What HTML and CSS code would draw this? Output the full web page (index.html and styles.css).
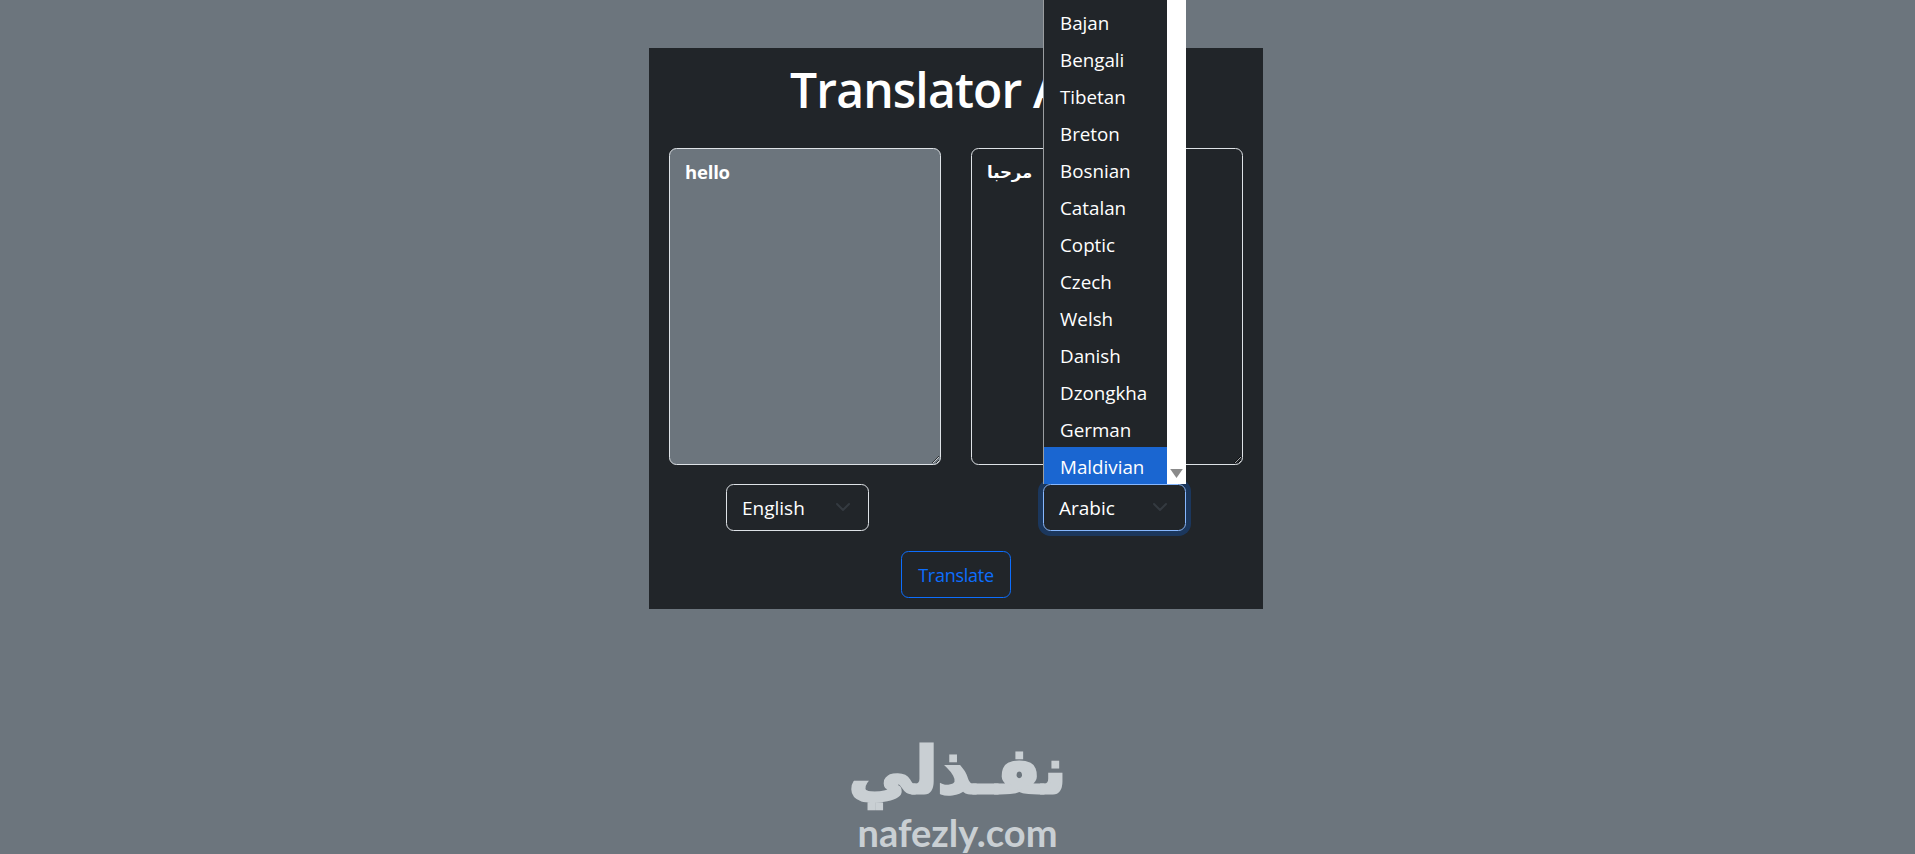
FILE: index.html
```html
<!DOCTYPE html>
<html lang="en">
<head>
<meta charset="utf-8">
<title>Translator App</title>
<link rel="stylesheet" href="styles.css">
</head>
<body>
<main class="card">
  <h1 class="title">Translator App</h1>
  <div class="panes">
    <textarea class="pane pane-source" readonly>hello</textarea>
    <textarea class="pane pane-target" readonly>مرحبا</textarea>
  </div>
  <div class="selects">
    <div class="select">
      <span>English</span>
      <svg class="chevron" viewBox="0 0 16 16" aria-hidden="true"><path d="M2 5l6 6 6-6"/></svg>
    </div>
    <div class="select select-open">
      <span>Arabic</span>
      <svg class="chevron" viewBox="0 0 16 16" aria-hidden="true"><path d="M2 5l6 6 6-6"/></svg>
      <div class="listbox">
        <ul class="options">
          <li>Bajan</li>
          <li>Bengali</li>
          <li>Tibetan</li>
          <li>Breton</li>
          <li>Bosnian</li>
          <li>Catalan</li>
          <li>Coptic</li>
          <li>Czech</li>
          <li>Welsh</li>
          <li>Danish</li>
          <li>Dzongkha</li>
          <li>German</li>
          <li class="active">Maldivian</li>
        </ul>
        <div class="scrollbar"><svg class="scroll-arrow" viewBox="0 0 14 10" aria-hidden="true"><path d="M0 0h14L7 10z"/></svg></div>
      </div>
    </div>
  </div>
  <div class="actions"><button class="translate" type="button">Translate</button></div>
</main>
<footer class="logo">
  <div class="logo-ar" lang="ar" dir="rtl">نفـذلي</div>
  <div class="logo-en">nafezly.com</div>
</footer>
</body>
</html>
```
FILE: styles.css
```css
html, body { margin: 0; height: 100%; }
body {
  background: #6c757d;
  font-family: "Open Sans", "Noto Sans", sans-serif;
  color: #fff;
  overflow: hidden;
}
.card {
  box-sizing: border-box;
  width: 614px;
  height: 561px;
  margin: 48px 0 0 649px;
  background: #212529;
  padding: 0 20px;
}
.title {
  margin: 0;
  height: 100px;
  font-size: 48px;
  line-height: 84px;
  font-weight: 600;
  text-align: center;
  letter-spacing: -.85px;
}
.panes { display: flex; justify-content: space-between; }
.pane {
  box-sizing: border-box;
  width: 272px;
  height: 317px;
  margin: 0;
  padding: 10px 15px;
  border: 1px solid #dee2e6;
  border-radius: 7.5px;
  color: #fff;
  font-family: "Open Sans", "DejaVu Sans", sans-serif;
  font-weight: 700;
  font-size: 18.5px;
  letter-spacing: -.2px;
  line-height: 25px;
  outline: none;
  display: block;
  resize: both;
}
.pane-source { background: #6c757d; }
.pane-target { background: #212529; font-size: 16.5px; }
.selects {
  display: flex;
  justify-content: space-between;
  padding: 19px 57px 0;
}
.select {
  box-sizing: border-box;
  position: relative;
  width: 143px;
  height: 47px;
  padding: 0 15px;
  display: flex;
  align-items: center;
  justify-content: space-between;
  border: 1px solid #dee2e6;
  border-radius: 7.5px;
  font-size: 19px;
}
.select-open {
  border-color: #86b7fe;
  box-shadow: 0 0 0 5px rgba(13, 110, 253, .25);
}
.chevron {
  width: 16px;
  height: 16px;
  margin: 0 2px 2px 0;
  fill: none;
  stroke: #343a40;
  stroke-width: 2;
  stroke-linecap: round;
  stroke-linejoin: round;
}
.listbox {
  position: absolute;
  left: -1px;
  right: -1px;
  bottom: 46px;
  height: 485px;
  overflow: hidden;
  display: flex;
  align-items: flex-end;
  background: #212529;
  border-left: 1px solid #9a9da0;
  box-sizing: border-box;
}
.options {
  flex: 1;
  list-style: none;
  margin: 0;
  padding: 0;
  font-size: 18.8px;
}
.options li {
  box-sizing: border-box;
  height: 37px;
  line-height: 37px;
  padding: 2px 0 0 16px;
}
.options .active { background: #1a66d1; }
.scrollbar {
  position: relative;
  align-self: stretch;
  flex: 0 0 19px;
  background: #fff;
}
.scroll-arrow {
  position: absolute;
  left: 3px;
  bottom: 6px;
  width: 13px;
  height: 9px;
  fill: #8a8a8a;
}
.actions { display: flex; justify-content: center; padding-top: 20px; }
.translate {
  box-sizing: border-box;
  width: 110px;
  height: 47px;
  background: transparent;
  border: 1px solid #0d6efd;
  border-radius: 7.5px;
  color: #0d6efd;
  font-family: inherit;
  font-size: 18px;
  letter-spacing: -.25px;
  padding: 0;
}
.logo {
  margin-top: 124px;
  text-align: center;
  color: #c9cfd3;
}
.logo-ar {
  font-family: "DejaVu Sans", sans-serif;
  font-weight: 700;
  font-size: 64px;
  line-height: 76px;
  -webkit-text-stroke: 3px #c9cfd3;
}
.logo-en {
  font-family: "Lato", sans-serif;
  font-weight: 700;
  font-size: 38px;
  line-height: 34px;
  margin-top: 6px;
}
```
